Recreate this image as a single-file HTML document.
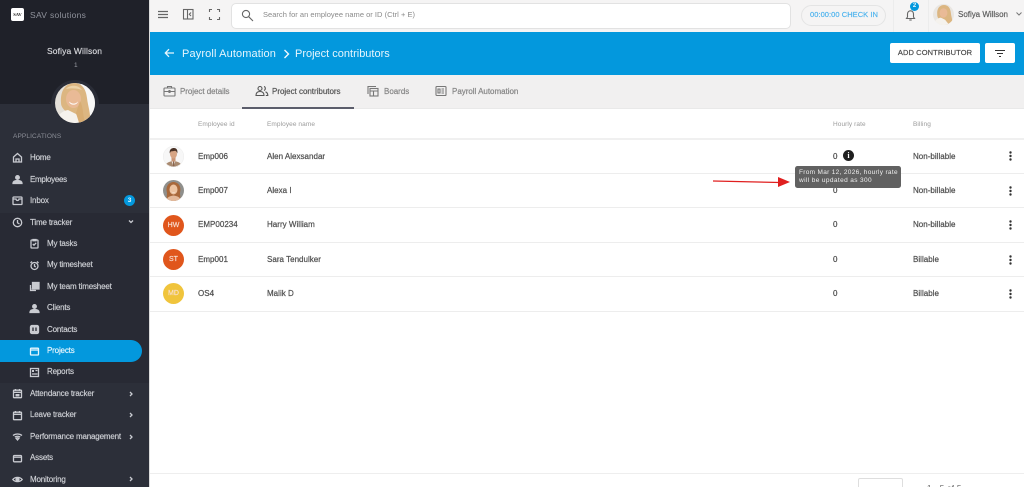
<!DOCTYPE html>
<html lang="en">
<head>
<meta charset="utf-8">
<title>Project contributors</title>
<style>
html,body{margin:0;padding:0;width:1024px;height:487px;overflow:hidden}
body{background:#fff;font-family:"Liberation Sans",sans-serif}
#p{position:relative;width:1024px;height:487px;overflow:hidden;background:#fff}
.a{position:absolute}
.t{position:absolute;white-space:nowrap;line-height:14px;margin-top:-7px}
.nav{font-size:8px;color:#d0d2d7;letter-spacing:-.17px;-webkit-text-stroke:.15px #d0d2d7}
.tab{font-size:8px;color:#868686;letter-spacing:-.02px;-webkit-text-stroke:.2px #868686}
.th{font-size:6.5px;color:#9b9b9b;letter-spacing:.08px}
.td{font-size:8px;color:#505050;letter-spacing:.02px;-webkit-text-stroke:.22px #505050}
.ln{position:absolute;left:150px;right:0;height:1px;background:#ededed}
.ic{position:absolute;fill:none;stroke:#c9cbd1;stroke-width:1.3}
.tabic{position:absolute;fill:none;stroke:#777;stroke-width:1.1}
.av{position:absolute;left:163px;width:21px;height:21px;border-radius:50%;color:#f8dfd2;font-size:7px;font-weight:normal;-webkit-text-stroke:.15px #f8dfd2;text-align:center;line-height:21px}
.keb{position:absolute;left:1008px}
</style>
</head>
<body>
<div id="p">

<!-- Sidebar -->
<div class="a" style="left:0;top:0;width:149px;height:104px;background:#1f2129"></div>
<div class="a" style="left:0;top:104px;width:149px;height:383px;background:#2c2f39"></div>
<div class="a" style="left:0;top:213px;width:149px;height:170px;background:#282a34"></div>
<div class="a" style="left:149px;top:0;width:1px;height:487px;background:#dcdcdc"></div>

<div class="a" style="left:11px;top:8px;width:13px;height:13px;background:#fff;border-radius:2px;color:#222;font:bold 4.5px/13px 'Liberation Serif',serif;text-align:center">SAV</div>
<div class="t" style="left:30px;top:15px;font-size:8.5px;color:#8f929b;letter-spacing:.3px">SAV solutions</div>
<div class="t" style="left:47px;top:50.5px;font-size:8.5px;color:#d9dade;letter-spacing:.12px;-webkit-text-stroke:.15px #d9dade">Sofiya Willson</div>
<div class="t" style="left:74px;top:65.5px;font-size:6.5px;color:#9a9ca4">1</div>

<svg class="a" style="left:51px;top:79px" width="48" height="48" viewBox="0 0 48 48">
<defs><clipPath id="c1"><circle cx="24" cy="24" r="20"/></clipPath></defs>
<path d="M0 25A24 24 0 0 1 48 25Z" fill="#2a2d37"/>
<circle cx="24" cy="24" r="20" fill="#e4e1da"/>
<g clip-path="url(#c1)">
<rect x="30" y="0" width="18" height="48" fill="#f8f8f7"/>
<path d="M10 24C9 10 16 4 23 4c8 0 12 6 13 15 1 9 4 15 3 25H28L17 34C13 31 10 28 10 24Z" fill="#dcb681"/>
<path d="M15 10c3-4 12-5 16 1-5-2-11-2-16-1Z" fill="#ecd3a8"/>
<ellipse cx="22.500" cy="20" rx="7.500" ry="9" fill="#e9ba96"/>
<path d="M18 22.500c3 2.800 6.500 2.800 9 0-1 4.200-8 4.200-9 0Z" fill="#fff"/>
<path d="M4 48c0-10 6-16 13-17l8 4 9 13Z" fill="#f5f2ed"/>
<path d="M29 22c4 7 2 14 6 24l-6 1-4-13Z" fill="#d8ad73"/>
</g>
</svg>

<div class="t" style="left:13px;top:136.5px;font-size:6.5px;color:#8b8e97;letter-spacing:.12px">APPLICATIONS</div>

<!-- top-level nav -->
<svg class="ic" style="left:12px;top:152px" width="11" height="11" viewBox="0 0 11 11"><path d="M1.5 5 5.5 1.5 9.5 5V10H1.5ZM4 10V7h3v3"/></svg>
<div class="t nav" style="left:30px;top:157.5px">Home</div>
<svg class="ic" style="left:12px;top:174px" width="11" height="11" viewBox="0 0 11 11"><circle cx="5.5" cy="3.5" r="1.8" fill="#c9cbd1"/><path d="M1 9.5c0-2.500 2-3 4.500-3s4.500.5 4.500 3Z" fill="#c9cbd1"/></svg>
<div class="t nav" style="left:30px;top:179.5px;letter-spacing:-.3px">Employees</div>
<svg class="ic" style="left:12px;top:195px" width="11" height="11" viewBox="0 0 11 11"><rect x="1" y="2" width="9" height="7.5" rx=".8"/><path d="M1 4H4c0 2 3 2 3 0H10"/></svg>
<div class="t nav" style="left:30px;top:201px">Inbox</div>
<div class="a" style="left:124px;top:195px;width:11px;height:11px;border-radius:50%;background:#0398dd;color:#e9f6fd;font-size:6.5px;font-weight:bold;line-height:11px;text-align:center">3</div>
<svg class="ic" style="left:12px;top:217px" width="11" height="11" viewBox="0 0 11 11"><circle cx="5.5" cy="5.5" r="4.2"/><path d="M5.5 3V5.8L7.5 7"/></svg>
<div class="t nav" style="left:30px;top:222.5px">Time tracker</div>
<svg class="ic" style="left:127px;top:219px" width="8" height="6" viewBox="0 0 8 6"><path d="M2 1.5 4 3.5 6 1.5"/></svg>

<!-- sub nav -->
<svg class="ic" style="left:29px;top:238px" width="11" height="11" viewBox="0 0 11 11"><rect x="2" y="2" width="7" height="8" rx=".6"/><path d="M4 1.5h3v1.200H4ZM3.800 6 5 7.200 7.200 4.800"/></svg>
<div class="t nav" style="left:47px;top:243.5px">My tasks</div>
<svg class="ic" style="left:29px;top:260px" width="11" height="11" viewBox="0 0 11 11"><circle cx="5.5" cy="6" r="3.5"/><path d="M5.5 4V6.200L6.800 7M1.5 3 3 1.5M9.5 3 8 1.5"/></svg>
<div class="t nav" style="left:47px;top:265px">My timesheet</div>
<svg class="ic" style="left:29px;top:281px" width="11" height="11" viewBox="0 0 11 11"><rect x="3.5" y="1.5" width="6.5" height="6.5" fill="#c9cbd1"/><path d="M1.5 4V9.5H7"/><path d="M2.500 8h3V4.500"/></svg>
<div class="t nav" style="left:47px;top:286.5px">My team timesheet</div>
<svg class="ic" style="left:29px;top:303px" width="11" height="11" viewBox="0 0 11 11"><circle cx="5.5" cy="3.5" r="1.8" fill="#c9cbd1"/><path d="M1 9.5c0-2.500 2-3 4.500-3s4.500.5 4.500 3Z" fill="#c9cbd1"/></svg>
<div class="t nav" style="left:47px;top:308px">Clients</div>
<svg class="ic" style="left:29px;top:324px" width="11" height="11" viewBox="0 0 11 11"><rect x="1.5" y="1.5" width="8" height="8" rx="1.5" fill="#c9cbd1"/><path d="M4 3.5V7M7 3.5V7" stroke="#282a34"/></svg>
<div class="t nav" style="left:47px;top:329.5px">Contacts</div>

<div class="a" style="left:0;top:340px;width:141.5px;height:21.5px;background:#0398dd;border-radius:0 11px 11px 0"></div>
<svg class="ic" style="left:29px;top:345.5px;stroke:#e8f6fd" width="11" height="11" viewBox="0 0 11 11"><rect x="1.5" y="2.200" width="8" height="6.800" rx=".6"/><path d="M1.5 4H9.5"/></svg>
<div class="t nav" style="left:47px;top:351px;color:#e8f6fd;-webkit-text-stroke-color:#e8f6fd">Projects</div>

<svg class="ic" style="left:29px;top:367px" width="11" height="11" viewBox="0 0 11 11"><rect x="1.5" y="1.5" width="8" height="8"/><rect x="3" y="3" width="2" height="2" fill="#c9cbd1" stroke="none"/><path d="M6.500 3.500H8.500M3 7H8.500"/></svg>
<div class="t nav" style="left:47px;top:372px">Reports</div>

<svg class="ic" style="left:12px;top:388px" width="11" height="11" viewBox="0 0 11 11"><rect x="1.5" y="2.200" width="8" height="7.5" rx=".6"/><path d="M3.500 1V3M7.500 1V3M1.5 4.300H9.500"/><rect x="3.500" y="6" width="4" height="2.500" fill="#c9cbd1" stroke="none"/></svg>
<div class="t nav" style="left:30px;top:393.5px">Attendance tracker</div>
<svg class="ic" style="left:127px;top:390px" width="8" height="8" viewBox="0 0 8 8"><path d="M3 2 5 4 3 6"/></svg>
<svg class="ic" style="left:12px;top:410px" width="11" height="11" viewBox="0 0 11 11"><rect x="1.5" y="2.200" width="8" height="7.5" rx=".6"/><path d="M3.500 1V3M7.500 1V3M1.5 4.300H9.500"/></svg>
<div class="t nav" style="left:30px;top:415px">Leave tracker</div>
<svg class="ic" style="left:127px;top:411px" width="8" height="8" viewBox="0 0 8 8"><path d="M3 2 5 4 3 6"/></svg>
<svg class="ic" style="left:12px;top:431px" width="11" height="11" viewBox="0 0 11 11"><path d="M1 4.500C3.500 2.500 7.500 2.500 10 4.500M2.800 6C4.300 5 6.700 5 8.200 6M5.500 9 4 7.200C5 6.700 6 6.700 7 7.200Z"/></svg>
<div class="t nav" style="left:30px;top:436.5px">Performance management</div>
<svg class="ic" style="left:127px;top:433px" width="8" height="8" viewBox="0 0 8 8"><path d="M3 2 5 4 3 6"/></svg>
<svg class="ic" style="left:12px;top:453px" width="11" height="11" viewBox="0 0 11 11"><rect x="1.5" y="2.500" width="8" height="6.300" rx=".8"/><path d="M1.5 4.200H9.500"/></svg>
<div class="t nav" style="left:30px;top:458px">Assets</div>
<svg class="ic" style="left:12px;top:474px" width="11" height="11" viewBox="0 0 11 11"><path d="M.8 5.500C3 2.700 8 2.700 10.200 5.500 8 8.300 3 8.300.8 5.500Z"/><circle cx="5.500" cy="5.500" r="1.500" fill="#c9cbd1"/></svg>
<div class="t nav" style="left:30px;top:479.5px">Monitoring</div>
<svg class="ic" style="left:127px;top:475px" width="8" height="8" viewBox="0 0 8 8"><path d="M3 2 5 4 3 6"/></svg>

<!-- Top bar -->
<div class="a" style="left:150px;top:0;width:874px;height:32px;background:#f5f4f4"></div>
<svg class="a" style="left:157px;top:9px" width="12" height="12" viewBox="0 0 12 12" fill="none" stroke="#666" stroke-width="1.200"><path d="M1 2.500H11M1 5.500H11M1 8.500H11"/></svg>
<svg class="a" style="left:182px;top:8px" width="13" height="13" viewBox="0 0 13 13" fill="none" stroke="#666" stroke-width="1.100"><rect x="1.5" y="1.5" width="9.5" height="9.5"/><path d="M5.500 1.5V11"/><path d="M9 4.500 7.300 6.300 9 8"/></svg>
<svg class="a" style="left:208px;top:8px" width="13" height="13" viewBox="0 0 13 13" fill="none" stroke="#666" stroke-width="1.100"><path d="M1.5 4V1.5H4M9 1.5h2.500V4M11.500 9v2.500H9M4 11.500H1.5V9"/></svg>
<div class="a" style="left:231px;top:3px;width:558px;height:24px;background:#fff;border:1px solid #e2e2e2;border-radius:5px"></div>
<svg class="a" style="left:241px;top:9px" width="13" height="13" viewBox="0 0 13 13" fill="none" stroke="#666" stroke-width="1.100"><circle cx="5" cy="5" r="3.600"/><path d="M7.800 7.800 12 12"/></svg>
<div class="t" style="left:263px;top:15px;font-size:7.5px;color:#8a8a8a;letter-spacing:.02px">Search for an employee name or ID (Ctrl + E)</div>
<div class="a" style="left:801px;top:5px;width:83px;height:19px;border:1px solid #e4e4e4;border-radius:11px"></div>
<div class="t" style="left:810px;top:14.5px;font-size:7.5px;color:#4fb4ee;letter-spacing:.05px;-webkit-text-stroke:.2px #4fb4ee">00:00:00 CHECK IN</div>
<div class="a" style="left:893px;top:0;width:1px;height:32px;background:#ececec"></div>
<div class="a" style="left:928px;top:0;width:1px;height:32px;background:#ececec"></div>
<svg class="a" style="left:904px;top:8px" width="13" height="14" viewBox="0 0 13 14" fill="none" stroke="#666" stroke-width="1.100"><path d="M2.500 10.500H10.500L9.500 9V6C9.500 4 8 2.800 6.500 2.800S3.500 4 3.500 6V9Z"/><path d="M5.300 12H7.700"/></svg>
<div class="a" style="left:910px;top:2px;width:9px;height:9px;border-radius:50%;background:#0398dd;color:#e9f6fd;font-size:6px;font-weight:bold;line-height:9px;text-align:center">2</div>
<svg class="a" style="left:933px;top:4px" width="21" height="21" viewBox="0 0 40 40">
<defs><clipPath id="c2"><circle cx="20" cy="20" r="20"/></clipPath></defs>
<g clip-path="url(#c2)"><rect width="40" height="40" fill="#e9e6e2"/>
<path d="M8 20C7 7 14 2 21 2c8 0 12 6 13 15 1 9 4 15 3 23H25L14 31C10 28 8 25 8 20Z" fill="#dcb681"/>
<ellipse cx="20" cy="17" rx="7.500" ry="9" fill="#e9ba96"/>
<path d="M2 40c0-8 6-13 13-14l8 4 8 10Z" fill="#f5f2ed"/></g></svg>
<div class="t" style="left:958px;top:14.5px;font-size:8px;color:#5e5e5e;letter-spacing:-.02px;-webkit-text-stroke:.2px #5e5e5e">Sofiya Willson</div>
<svg class="a" style="left:1015px;top:11px" width="8" height="6" viewBox="0 0 8 6" fill="none" stroke="#777"><path d="M1.5 1.5 4 4 6.500 1.500"/></svg>

<!-- Blue banner -->
<div class="a" style="left:150px;top:32px;width:874px;height:43px;background:#0398dd"></div>
<svg class="a" style="left:164px;top:48px" width="11" height="10" viewBox="0 0 11 10" fill="none" stroke="#e8f6fd" stroke-width="1.300"><path d="M10 5H1.500M5 1.200 1.300 5 5 8.800"/></svg>
<div class="t" style="left:182px;top:54px;font-size:11px;color:#e6f5fd;letter-spacing:.13px">Payroll Automation</div>
<svg class="a" style="left:283px;top:49px" width="8" height="10" viewBox="0 0 8 10" fill="none" stroke="#f0f9fe" stroke-width="1.400"><path d="M1.500 1 5.500 5 1.500 9"/></svg>
<div class="t" style="left:295px;top:54px;font-size:11px;color:#e6f5fd;letter-spacing:0">Project contributors</div>
<div class="a" style="left:890px;top:43px;width:90px;height:19.5px;background:#fff;border-radius:2px;color:#4a4a4a;font-size:7.5px;-webkit-text-stroke:.2px #4a4a4a;line-height:20px;text-align:center;letter-spacing:.1px">ADD CONTRIBUTOR</div>
<div class="a" style="left:985px;top:43px;width:30px;height:19.5px;background:#fff;border-radius:2px"></div>
<svg class="a" style="left:994px;top:49px" width="12" height="9" viewBox="0 0 12 9" fill="none" stroke="#333" stroke-width="1.100"><path d="M1 1.500H11M3 4.500H9M5 7.500H7"/></svg>

<!-- Tabs -->
<div class="a" style="left:150px;top:75px;width:874px;height:33px;background:#f1f0f0"></div>
<div class="a" style="left:150px;top:108px;width:874px;height:1px;background:#e9e9e9"></div>
<div class="a" style="left:242px;top:107px;width:112px;height:1.5px;background:#5b5d6b"></div>
<svg class="tabic" style="left:163px;top:85px" width="13" height="12" viewBox="0 0 13 12"><rect x="1" y="3" width="11" height="8" rx=".8"/><path d="M4.500 3V1.500H8.500V3M1 6.500H12M6 5.500H7V7.500H6Z"/></svg>
<div class="t tab" style="left:180px;top:91.5px;letter-spacing:-.05px">Project details</div>
<svg class="tabic" style="left:255px;top:85px;stroke:#555" width="14" height="12" viewBox="0 0 14 12"><circle cx="5" cy="3.500" r="2"/><path d="M1 10.500c0-3 2-4 4-4s4 1 4 4Z"/><path d="M9 1.500c1.500.3 2 3 0 4M10.500 6.800c1.500.5 2.300 1.800 2.300 3.700h-2"/></svg>
<div class="t tab" style="left:272px;top:91.5px;color:#565656;-webkit-text-stroke-color:#565656">Project contributors</div>
<svg class="tabic" style="left:367px;top:85px" width="12" height="12" viewBox="0 0 12 12"><path d="M1 9V1.500H9"/><rect x="3" y="3.500" width="8" height="7.500"/><path d="M3 6H11M6.500 6V11"/></svg>
<div class="t tab" style="left:384px;top:91.5px">Boards</div>
<svg class="tabic" style="left:435px;top:85px" width="12" height="12" viewBox="0 0 12 12"><rect x="1" y="1.500" width="10" height="9" rx=".8"/><path d="M3 4H5V8H3ZM6.500 4H9M6.500 6H9M6.500 8H9"/></svg>
<div class="t tab" style="left:452px;top:91.5px">Payroll Automation</div>

<!-- Table header -->
<div class="t th" style="left:198px;top:124.5px">Employee id</div>
<div class="t th" style="left:267px;top:124.5px">Employee name</div>
<div class="t th" style="left:833px;top:124.5px">Hourly rate</div>
<div class="t th" style="left:913px;top:124.5px">Billing</div>
<div class="a" style="left:150px;top:138px;width:874px;height:1.5px;background:#f0f0f0"></div>
<div class="ln" style="top:173px"></div>
<div class="ln" style="top:207px"></div>
<div class="ln" style="top:241.5px"></div>
<div class="ln" style="top:276px"></div>
<div class="ln" style="top:310.5px"></div>

<!-- Row 1 -->
<svg class="a" style="left:163px;top:146px" width="21" height="21" viewBox="0 0 42 42">
<defs><clipPath id="c3"><circle cx="21" cy="21" r="21"/></clipPath></defs>
<g clip-path="url(#c3)"><rect width="42" height="42" fill="#f7f7f7"/>
<path d="M4 42c1-8 7-11 17-12 10 1 16 4 17 12Z" fill="#a98a70"/>
<path d="M17 30 21 42 25 30 21 28Z" fill="#eee9e4"/>
<path d="M20 31h2.500L23 42H19.500Z" fill="#8a6650"/>
<rect x="17" y="22" width="8" height="9" fill="#c99475"/>
<ellipse cx="21" cy="16" rx="7" ry="9" fill="#d7a585"/>
<path d="M13.500 15C12 6 18 4 22 4c5 0 8 4 6.500 11-1-3-2-5-4-5.500-3 1-8 1-9 1.500Z" fill="#4a3226"/></g>
<circle cx="21" cy="21" r="20.500" fill="none" stroke="#ececec"/></svg>
<div class="t td" style="left:198px;top:156.5px">Emp006</div>
<div class="t td" style="left:267px;top:156.5px">Alen Alexsandar</div>
<div class="t td" style="left:833px;top:156.5px">0</div>
<div class="a" style="left:843px;top:150px;width:11px;height:11px;border-radius:50%;background:#1f1f1f;color:#fff;font:bold 8px/11px 'Liberation Serif',serif;text-align:center">i</div>
<div class="t td" style="left:913px;top:156.5px">Non-billable</div>
<svg class="keb" style="top:150px" width="5" height="12" viewBox="0 0 5 12" fill="#333"><circle cx="2.500" cy="2.500" r="1.200"/><circle cx="2.500" cy="6" r="1.200"/><circle cx="2.500" cy="9.500" r="1.200"/></svg>

<!-- Row 2 -->
<svg class="a" style="left:163px;top:180px" width="21" height="21" viewBox="0 0 42 42">
<defs><clipPath id="c4"><circle cx="21" cy="21" r="21"/></clipPath></defs>
<g clip-path="url(#c4)"><rect width="42" height="42" fill="#8f8f8c"/>
<path d="M8 26C4 10 14 4 21 4s17 6 13 22c0 6 2 10-2 14H10C6 36 8 30 8 26Z" fill="#a9683a"/>
<ellipse cx="21" cy="19" rx="8" ry="10" fill="#edc4a2"/>
<path d="M6 42c1-7 7-10 15-11 8 1 14 4 15 11Z" fill="#e4b99a"/>
<path d="M17 23c2 2 6 2 8 0-1 3-7 3-8 0Z" fill="#fff"/></g></svg>
<div class="t td" style="left:198px;top:190.5px">Emp007</div>
<div class="t td" style="left:267px;top:190.5px">Alexa I</div>
<div class="t td" style="left:833px;top:190.5px">0</div>
<div class="t td" style="left:913px;top:190.5px">Non-billable</div>
<svg class="keb" style="top:184.5px" width="5" height="12" viewBox="0 0 5 12" fill="#333"><circle cx="2.500" cy="2.500" r="1.200"/><circle cx="2.500" cy="6" r="1.200"/><circle cx="2.500" cy="9.500" r="1.200"/></svg>

<!-- Row 3 -->
<div class="av" style="top:214.5px;background:#e0561c">HW</div>
<div class="t td" style="left:198px;top:225px">EMP00234</div>
<div class="t td" style="left:267px;top:225px">Harry William</div>
<div class="t td" style="left:833px;top:225px">0</div>
<div class="t td" style="left:913px;top:225px">Non-billable</div>
<svg class="keb" style="top:219px" width="5" height="12" viewBox="0 0 5 12" fill="#333"><circle cx="2.500" cy="2.500" r="1.200"/><circle cx="2.500" cy="6" r="1.200"/><circle cx="2.500" cy="9.500" r="1.200"/></svg>

<!-- Row 4 -->
<div class="av" style="top:248.5px;background:#e0561c">ST</div>
<div class="t td" style="left:198px;top:259.5px">Emp001</div>
<div class="t td" style="left:267px;top:259.5px">Sara Tendulker</div>
<div class="t td" style="left:833px;top:259.5px">0</div>
<div class="t td" style="left:913px;top:259.5px">Billable</div>
<svg class="keb" style="top:253.5px" width="5" height="12" viewBox="0 0 5 12" fill="#333"><circle cx="2.500" cy="2.500" r="1.200"/><circle cx="2.500" cy="6" r="1.200"/><circle cx="2.500" cy="9.500" r="1.200"/></svg>

<!-- Row 5 -->
<div class="av" style="top:283px;background:#f0c43c">MD</div>
<div class="t td" style="left:198px;top:294px">OS4</div>
<div class="t td" style="left:267px;top:294px">Malik D</div>
<div class="t td" style="left:833px;top:294px">0</div>
<div class="t td" style="left:913px;top:294px">Billable</div>
<svg class="keb" style="top:288px" width="5" height="12" viewBox="0 0 5 12" fill="#333"><circle cx="2.500" cy="2.500" r="1.200"/><circle cx="2.500" cy="6" r="1.200"/><circle cx="2.500" cy="9.500" r="1.200"/></svg>

<!-- Tooltip and annotation arrow -->
<div class="a" style="left:795px;top:166px;width:106px;height:21.5px;background:#616161;border-radius:2.5px"></div>
<div class="t" style="left:799px;top:172.5px;font-size:6.5px;color:#eee;letter-spacing:.31px">From Mar 12, 2026, hourly rate</div>
<div class="t" style="left:799px;top:181px;font-size:6.5px;color:#eee;letter-spacing:.38px">will be updated as 300</div>
<svg class="a" style="left:710px;top:174px" width="82" height="16" viewBox="0 0 82 16"><path d="M3 7 70 8.500" stroke="#e01f1f" stroke-width="1.300" fill="none"/><path d="M68 3 80 8 68 13Z" fill="#e01f1f"/></svg>

<!-- Footer -->
<div class="a" style="left:150px;top:473px;width:874px;height:1px;background:#eeeeee"></div>
<div class="a" style="left:858px;top:478px;width:43px;height:20px;border:1px solid #dedede;border-radius:2px"></div>
<div class="t" style="left:927px;top:489px;font-size:8px;color:#666;letter-spacing:.3px">1 - 5 of 5</div>

</div>
</body>
</html>
